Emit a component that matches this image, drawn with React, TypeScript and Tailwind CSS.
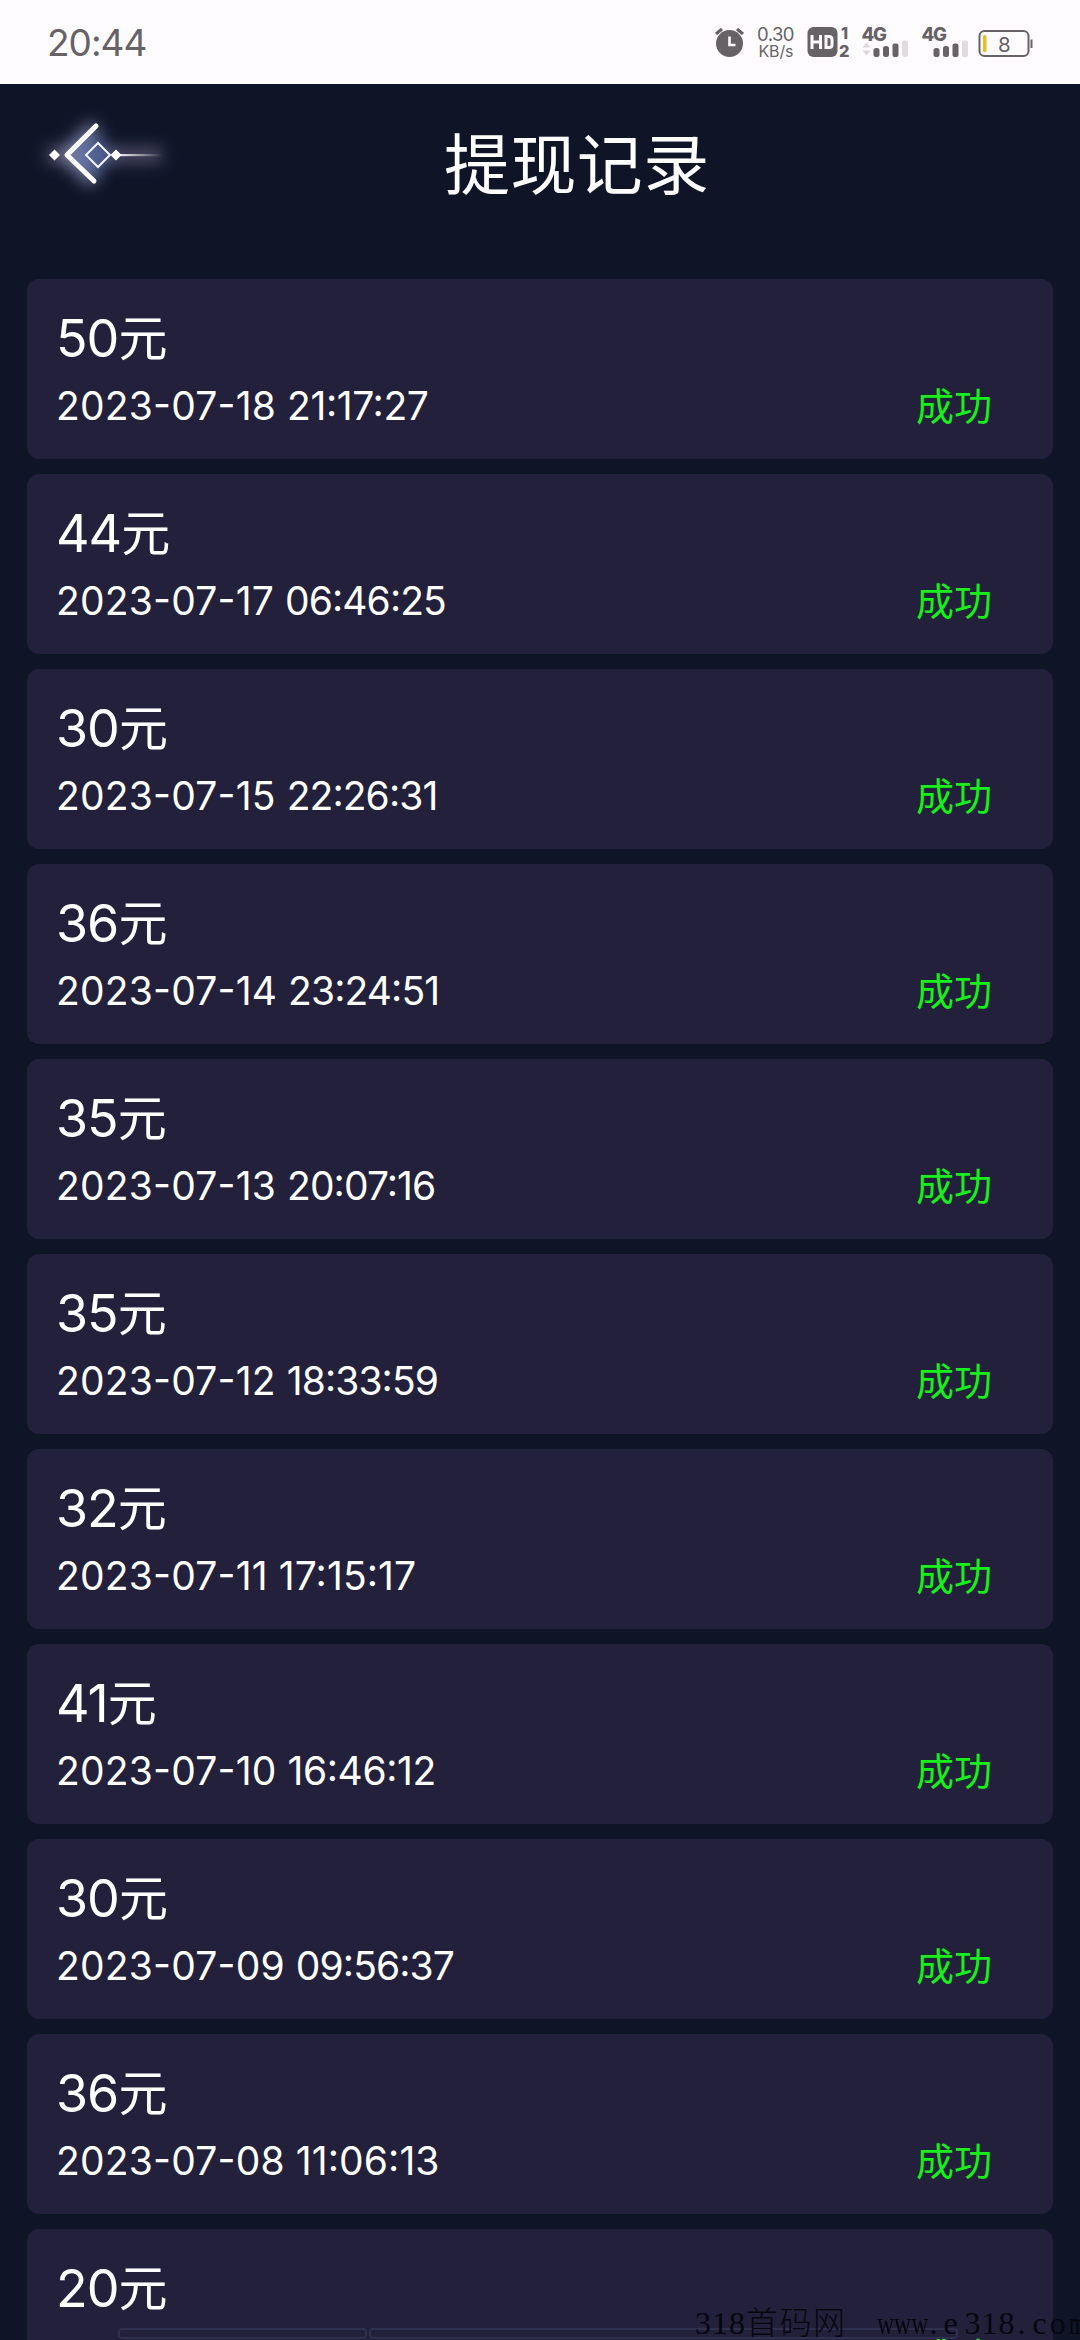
const records = [
  ['50', '2023-07-18', '21:17:27'],
  ['44', '2023-07-17', '06:46:25'],
  ['30', '2023-07-15', '22:26:31'],
  ['36', '2023-07-14', '23:24:51'],
  ['35', '2023-07-13', '20:07:16'],
  ['35', '2023-07-12', '18:33:59'],
  ['32', '2023-07-11', '17:15:17'],
  ['41', '2023-07-10', '16:46:12'],
  ['30', '2023-07-09', '09:56:37'],
  ['36', '2023-07-08', '11:06:13'],
  ['20', '2023-07-07', '10:20:15'],
];

// The digit 1 is narrow, so times with several of them need looser spacing.
function timeTracking(time: string) {
  const ones = time.split('1').length - 1;
  if (ones >= 3) return 'tracking-[0.1px]';
  if (ones === 2) return 'tracking-[-0.4px]';
  return 'tracking-[-0.9px]';
}

function Signal({ arrows = false }: { arrows?: boolean }) {
  return (
    <svg width="50" height="34" viewBox="0 0 50 34">
      <text x="0" y="15" fontSize="18.5" fontWeight="800" fill="#666266" letterSpacing="-1.3">4G</text>
      {arrows && <path d="M1 21.500h8l-4-5zM1 24.500h8l-4 5z" fill="#dcd8dc" />}
      <rect x="12" y="22" width="6" height="9" rx="2.500" fill="#666266" />
      <rect x="21.500" y="20" width="6" height="11" rx="2.500" fill="#666266" />
      <rect x="31" y="17.500" width="6" height="13.500" rx="2" fill="#666266" />
      <rect x="40.500" y="14.500" width="6" height="16.500" rx="2" fill="#dfdbdf" />
    </svg>
  );
}

function StatusBar() {
  return (
    <div className="flex h-[84px] shrink-0 items-center justify-between bg-[#fffcff] pl-[47px] text-[#666266]">
      <span className="text-[37px] leading-none tracking-[-1px]">20:44</span>
      <svg width="390" height="84" viewBox="-0.5 0 390 84" className="shrink-0">
        <circle cx="39" cy="43.500" r="13.500" fill="#666266" />
        <path d="M25.500 34l6-5M52.500 34l-6-5" stroke="#666266" strokeWidth="3.200" fill="none" />
        <path d="M39 36.500v8.500h6" stroke="#fffcff" strokeWidth="2.600" fill="none" />
        <text x="66.500" y="41" fontSize="18.500" fill="#666266" textLength="37.500">0.30</text>
        <text x="68" y="57" fontSize="16" fill="#666266" textLength="35">KB/s</text>
        <rect x="117" y="27" width="30" height="30" rx="6" fill="#666266" />
        <path d="M121.500 35v14M130 35v14M121.500 42h8.500M135.500 36.500h3q3 0 3 3v5q0 3-3 3h-3z" stroke="#fffcff" strokeWidth="3" fill="none" />
        <text x="150.500" y="39" fontSize="16" fontWeight="800" fill="#666266">1</text>
        <text x="148.500" y="56.500" fontSize="16.500" fontWeight="800" fill="#666266">2</text>
        <g transform="translate(171 26)"><Signal arrows /></g>
        <g transform="translate(231 26)"><Signal /></g>
        <rect x="289" y="31" width="49" height="25" rx="5" stroke="#666266" strokeWidth="2" fill="none" />
        <rect x="292.500" y="35" width="3.500" height="17" rx="1.500" fill="#e8bd22" />
        <rect x="340" y="39.500" width="2" height="8.500" fill="#666266" />
        <text x="307.500" y="51.500" fontSize="20.500" fill="#666266">8</text>
      </svg>
    </div>
  );
}

function BackIcon() {
  return (
    <svg width="180" height="120" viewBox="0 0 180 120" className="shrink-0">
      <defs>
        <filter id="wide" x="-50%" y="-50%" width="200%" height="200%"><feGaussianBlur stdDeviation="8" /></filter>
        <linearGradient id="tail" gradientUnits="userSpaceOnUse" x1="116" y1="0" x2="162" y2="0">
          <stop offset="0" stopColor="#fff" />
          <stop offset="1" stopColor="#fff" stopOpacity="0" />
        </linearGradient>
      </defs>
      <g filter="url(#wide)">
        <path d="M96 42L67 71l27 27" stroke="#c5c8ec" strokeOpacity=".55" strokeWidth="14" fill="none" />
        <path d="M46 71h116" stroke="#b5a4cc" strokeOpacity=".4" strokeWidth="15" />
        <path d="M94 46L68 71l26 26 20-26z" fill="#5f7ec0" fillOpacity=".6" />
      </g>
      <path d="M96 42L67 71l27 26" stroke="#fff" strokeWidth="5" strokeLinecap="round" strokeLinejoin="round" fill="none" />
      <path d="M98 59l12 12-12 12-12-12z" stroke="#f3f4ff" strokeWidth="2" fill="#4f5f94" fillOpacity=".5" />
      <path d="M54.500 65.500l5.500 5.500-5.500 5.500-5.500-5.500zM116 65.500l5.500 5.500-5.500 5.500-5.500-5.500z" fill="#fff" />
      <rect x="116" y="70" width="46" height="2.200" fill="url(#tail)" />
    </svg>
  );
}

export default function App() {
  return (
    <div className="relative flex h-[2340px] w-[1080px] flex-col overflow-hidden bg-[#0f1427] font-['Inter','Noto_Sans_CJK_SC',sans-serif]">
      <StatusBar />
      <header className="flex h-[195px] shrink-0 items-start">
        <BackIcon />
        <h1 className="ml-[264px] mt-7 font-['Noto_Sans_CJK_SC',sans-serif] text-[66px] leading-[96px] tracking-[0.4px] text-white">提现记录</h1>
      </header>
      <main className="flex flex-col gap-[15px] px-[27px]">
        {records.map(([amount, date, time]) => (
          <article key={date} className="flex h-[180px] shrink-0 flex-col rounded-xl bg-[#22203a] pl-[29px] pr-[61px] pt-[30px] text-white">
            <div className="flex h-[60px] items-center text-[52px] leading-[60px]">
              <span className="tracking-[-1px]">{amount}</span>
              <span className="text-[49px]">元</span>
            </div>
            <div className="flex h-[73px] items-center justify-between">
              <time className="flex gap-[11px] text-[39px] leading-none [font-feature-settings:'case']">
                <span className="tracking-[0.2px]">{date}</span>
                <span className={timeTracking(time)}>{time}</span>
              </time>
              <span className="text-[38px] leading-none text-[#18f01c]">成功</span>
            </div>
          </article>
        ))}
      </main>
      <div className="absolute left-[118px] top-[2328px] flex gap-0.5">
        <div className="h-[11px] w-[249px] rounded border-2 border-[#2f3050]" />
        <div className="h-[11px] w-[589px] rounded border-2 border-[#2f3050]" />
      </div>
      <div className="absolute left-[695px] top-[2305px] flex whitespace-pre font-['Liberation_Serif','Noto_Sans_CJK_SC',serif] text-[32px] leading-9 text-[#07070f]">
        <span className="tracking-[1px]">318</span>
        <span className="font-light tracking-[1.500px]">首码网</span>
        <span className="ml-[30px] w-[53px] origin-left scale-x-[0.74]">www</span>
        <span className="w-[14px]">.</span>
        <span className="w-[21px]">e</span>
        <span className="tracking-[1px]">318</span>
        <span className="ml-0.5 w-[15px]">.</span>
        <span className="tracking-[3px]">co</span>
        <span className="origin-left scale-x-[0.68]">m</span>
      </div>
    </div>
  );
}
